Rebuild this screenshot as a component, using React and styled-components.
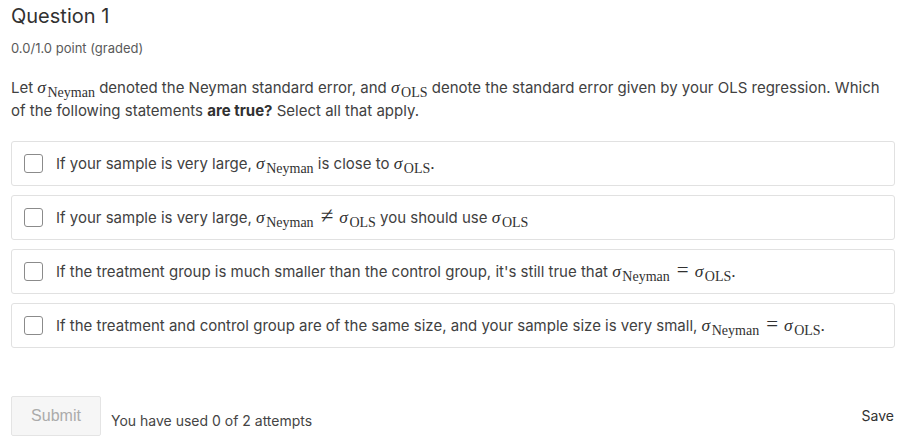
import React from "react";
import styled, { createGlobalStyle } from "styled-components";

const Global = createGlobalStyle`
  body {
    margin: 0;
    background: #fff;
    font-family: "Inter", "Noto Sans", sans-serif;
    color: #414141;
  }
`;

const Page = styled.div`
  width: 884px;
  padding: 4px 13px 0 11px;
`;

const Title = styled.h2`
  margin: 0;
  font-size: 20px;
  line-height: 24px;
  font-weight: 400;
  color: #313131;
`;

const Points = styled.div`
  margin-top: 11px;
  font-size: 13px;
  line-height: 18px;
  color: #5a5a5a;
`;

const Prompt = styled.p`
  margin: 19px 0 0;
  font-size: 15px;
  line-height: 23px;
  color: #414141;
  b {
    font-weight: 700;
    color: #313131;
  }
`;

const Options = styled.div`
  margin-top: 19px;
  display: flex;
  flex-direction: column;
  gap: 9px;
`;

const Option = styled.label`
  box-sizing: border-box;
  height: 45px;
  display: flex;
  align-items: center;
  gap: 13px;
  padding: 0 12px;
  border: 1px solid #e1e1e1;
  border-radius: 3px;
  font-size: 15px;
  color: #414141;
  cursor: pointer;
`;

const Box = styled.span`
  box-sizing: border-box;
  width: 19px;
  height: 19px;
  flex: none;
  border: 1px solid #8b8b8b;
  border-radius: 3px;
  background: #fff;
`;

const Math = styled.span`
  font-family: "Liberation Serif", "Times New Roman", serif;
  font-size: 17.5px;
  line-height: 0;
  white-space: nowrap;
  color: #313131;
`;

const Sigma = styled.i`
  font-style: italic;
`;

const Sub = styled.span`
  font-size: 14px;
  vertical-align: -4px;
  margin-left: 1.5px;
`;

const Rel = styled.span`
  font-size: ${(p) => (p.$neq ? "23px" : "21px")};
  margin: 0 6px 0 7px;
`;

const Footer = styled.div`
  margin-top: 48px;
  display: flex;
  align-items: flex-start;
`;

const Submit = styled.button`
  box-sizing: border-box;
  width: 90px;
  height: 40px;
  background: #f6f6f6;
  border: 1px solid #e4e4e4;
  border-radius: 2px;
  color: #ababab;
  font-family: "Liberation Sans", Arial, sans-serif;
  font-size: 16px;
`;

const Attempts = styled.span`
  margin: 16px 0 0 10px;
  font-size: 14px;
  line-height: 18px;
  color: #454545;
`;

const Save = styled.span`
  margin: 11px 1px 0 auto;
  font-size: 14px;
  line-height: 18px;
  color: #313131;
`;

function S({ sub }) {
  return (
    <>
      <Sigma>σ</Sigma>
      <Sub>{sub}</Sub>
    </>
  );
}

export default function App() {
  return (
    <Page>
      <Global />
      <Title>Question 1</Title>
      <Points>0.0/1.0 point (graded)</Points>
      <Prompt>
        Let{" "}
        <Math>
          <S sub="Neyman" />
        </Math>{" "}
        denoted the Neyman standard error, and{" "}
        <Math>
          <S sub="OLS" />
        </Math>{" "}
        denote the standard error given by your OLS regression. Which of the
        following statements <b>are true?</b> Select all that apply.
      </Prompt>
      <Options>
        <Option>
          <Box />
          <span>
            If your sample is very large,{" "}
            <Math>
              <S sub="Neyman" />
            </Math>{" "}
            is close to{" "}
            <Math>
              <S sub="OLS" />.
            </Math>
          </span>
        </Option>
        <Option>
          <Box />
          <span>
            If your sample is very large,{" "}
            <Math>
              <S sub="Neyman" />
              <Rel $neq>≠</Rel>
              <S sub="OLS" />
            </Math>{" "}
            you should use{" "}
            <Math>
              <S sub="OLS" />
            </Math>
          </span>
        </Option>
        <Option>
          <Box />
          <span>
            If the treatment group is much smaller than the control group, it's
            still true that{" "}
            <Math>
              <S sub="Neyman" />
              <Rel>=</Rel>
              <S sub="OLS" />.
            </Math>
          </span>
        </Option>
        <Option>
          <Box />
          <span>
            If the treatment and control group are of the same size, and your
            sample size is very small,{" "}
            <Math>
              <S sub="Neyman" />
              <Rel>=</Rel>
              <S sub="OLS" />.
            </Math>
          </span>
        </Option>
      </Options>
      <Footer>
        <Submit disabled>Submit</Submit>
        <Attempts>You have used 0 of 2 attempts</Attempts>
        <Save>Save</Save>
      </Footer>
    </Page>
  );
}
